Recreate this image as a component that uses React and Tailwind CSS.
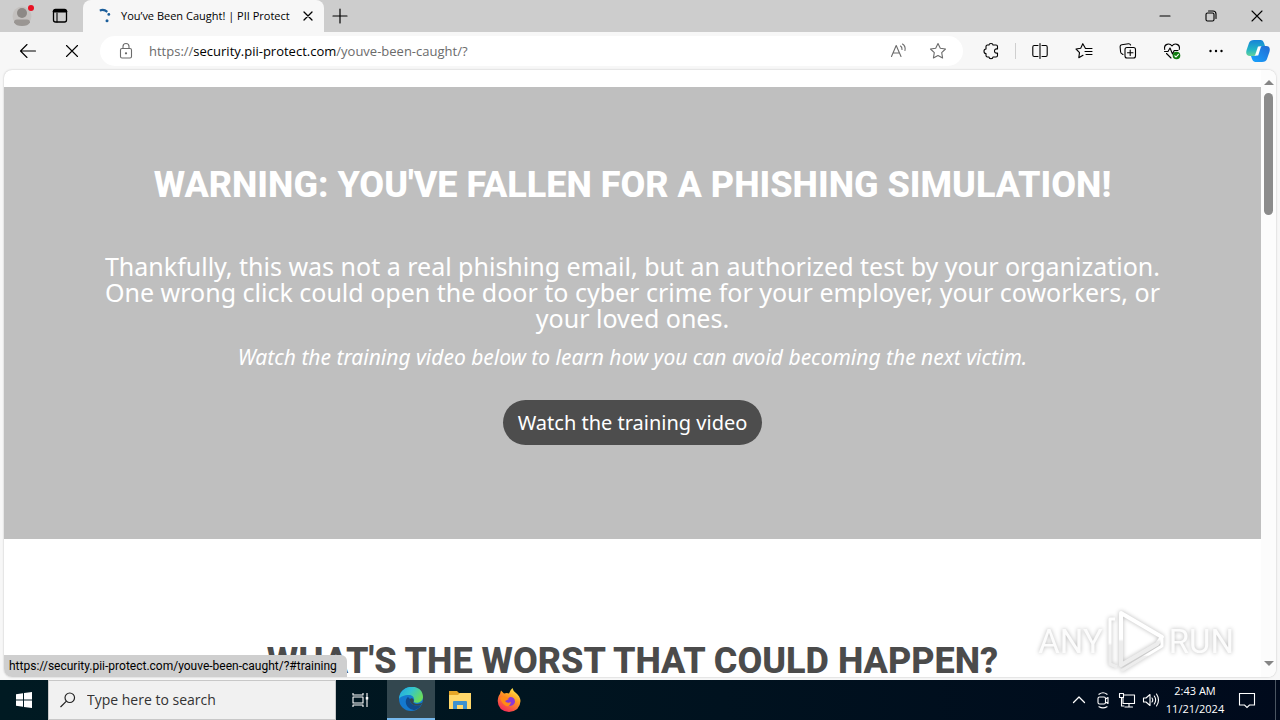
import { useState } from "react";

const PAGE_URL = "https://security.pii-protect.com/youve-been-caught/?";

function Icon({ children, className = "size-5", label }) {
  return (
    <svg
      viewBox="0 0 20 20"
      className={className}
      fill="none"
      stroke="currentColor"
      strokeWidth="1.1"
      strokeLinecap="round"
      strokeLinejoin="round"
      role={label ? "img" : undefined}
      aria-label={label}
      aria-hidden={label ? undefined : true}
    >
      {children}
    </svg>
  );
}

function TabBar() {
  return (
    <div className="flex h-8 shrink-0 bg-[#cdcdcd]">
      <div className="flex w-[83px] items-center rounded-br-md">
        <button aria-label="Profile" className="ml-3">
          <svg viewBox="0 0 24 24" className="size-6">
            <circle cx="10" cy="12" r="9.5" fill="#c4c1bf" />
            <circle cx="10" cy="9" r="5" fill="#8d8986" />
            <path d="M2 18.5Q2 15.5 5 15.5H15Q18 15.5 18 18.5Q16 22 10 22Q4 22 2 18.5Z" fill="#9a9693" />
            <circle cx="19" cy="4" r="3" fill="#e81123" />
          </svg>
        </button>
        <button aria-label="Tab actions" className="ml-3.5">
          <Icon>
            <rect x="3.5" y="3.5" width="13" height="12.5" rx="2" strokeWidth="1.3" />
            <path d="M4 5.2H16" strokeWidth="2.4" />
            <path d="M7 7V16" strokeWidth="1.1" />
          </Icon>
        </button>
      </div>
      <div className="flex w-[241px] items-center rounded-t-lg bg-[#f7f7f7]">
        <svg viewBox="0 0 16 16" className="ml-3.5 size-4 shrink-0" fill="#1b5e9b">
          <path d="M2.5 1.5Q7 -0.5 11 3L9.7 4.8Q6.5 2 3 3.6Z" />
          <circle cx="11.8" cy="6.4" r="1.4" />
          <circle cx="10" cy="12.7" r="1.5" />
        </svg>
        <span className="ml-2 flex-1 text-[11px] whitespace-nowrap">You’ve Been Caught! | PII Protect</span>
        <button aria-label="Close tab" className="mr-1.5">
          <Icon>
            <path d="M6 6L14 14M14 6L6 14" strokeWidth="1.3" />
          </Icon>
        </button>
      </div>
      <button aria-label="New tab" className="ml-1.5">
        <Icon>
          <path d="M3 10H17M10 3V17" strokeWidth="1.2" />
        </Icon>
      </button>
      <div className="ml-auto flex">
        <button aria-label="Minimize" className="flex w-[46px] items-center justify-center">
          <Icon>
            <path d="M5 10H15" />
          </Icon>
        </button>
        <button aria-label="Restore" className="flex w-[46px] items-center justify-center">
          <Icon>
            <rect x="5" y="7" width="8" height="8" rx="1.5" />
            <path d="M7.5 5H12Q15 5 15 8V12.5" />
          </Icon>
        </button>
        <button aria-label="Close window" className="flex w-[46px] items-center justify-center">
          <Icon>
            <path d="M5 5L15 15M15 5L5 15" />
          </Icon>
        </button>
      </div>
    </div>
  );
}

function AddressBar() {
  const [url, setUrl] = useState(PAGE_URL);
  const [editing, setEditing] = useState(false);

  return (
    <div className="ml-[18px] flex h-[30px] flex-1 items-center rounded-full bg-white pr-[15px] pl-4 text-[#6b6b6b]">
      <Icon label="Secure site">
        <rect x="4.5" y="7.5" width="11" height="9.5" rx="1.5" />
        <path d="M7 7.5V5.5A3 3 0 0 1 13 5.5V7.5" />
        <circle cx="10" cy="12.3" r="0.6" fill="currentColor" />
      </Icon>
      <div className="relative ml-[13px] flex-1 text-[13px] leading-5">
        <input
          type="text"
          aria-label="Address"
          value={editing ? url : ""}
          onFocus={() => setEditing(true)}
          onBlur={() => setEditing(false)}
          onChange={(e) => setUrl(e.target.value)}
          className="block w-full bg-transparent text-black outline-none"
        />
        {!editing && (
          <span className="pointer-events-none absolute inset-0 whitespace-nowrap">
            https://<span className="text-black">security.pii-protect.com</span>/youve-been-caught/?
          </span>
        )}
      </div>
      <button aria-label="Read aloud">
        <Icon>
          <path d="M2.5 15.5L7.2 4.5L12 15.5M4.2 12H10.4" />
          <path d="M11.5 5Q13.2 6 13 8.5M13.5 3Q16.8 5 16 9.5" />
        </Icon>
      </button>
      <button aria-label="Add to favorites" className="ml-[19px]">
        <Icon>
          <path d="M10 2.5L12.3 7.3L17.5 8L13.7 11.7L14.6 17L10 14.5L5.4 17L6.3 11.7L2.5 8L7.7 7.3Z" />
        </Icon>
      </button>
    </div>
  );
}

function Toolbar() {
  return (
    <div className="flex h-[38px] shrink-0 items-center bg-[#f7f7f7] pr-2.5">
      <button aria-label="Back" className="ml-[18px]">
        <Icon>
          <path d="M2.5 10H17.5M9 3.5L2.5 10L9 16.5" />
        </Icon>
      </button>
      <button aria-label="Stop" className="ml-6">
        <Icon>
          <path d="M4.5 4.5L15.5 15.5M15.5 4.5L4.5 15.5" />
        </Icon>
      </button>
      <AddressBar />
      <div className="ml-[18px] flex items-center gap-6">
        <button aria-label="Extensions">
          <Icon>
            <path d="M6 4H8Q8 2.5 10 2.5Q12 2.5 12 4H15Q16.5 4 16.5 5.5V8Q13.5 7.5 13.5 10Q13.5 12.5 16.5 12V14.5Q16.5 16 15 16H12Q12 17.7 10 17.7Q8 17.7 8 16H6.5Q5 16 5 14.5V12.5Q3 12.5 3 10.2Q3 8 5 8V5.5Q5 4 6.5 4" />
          </Icon>
        </button>
        <span className="-mx-2.5 h-4 w-px bg-[#cfcfcf]" />
        <button aria-label="Split screen">
          <Icon>
            <path d="M8 4.5H4.2Q2.8 4.5 2.8 6V14Q2.8 15.5 4.2 15.5H8M12 4.5H15.8Q17.2 4.5 17.2 6V14Q17.2 15.5 15.8 15.5H12M10 2.5V17.5" />
          </Icon>
        </button>
        <button aria-label="Favorites">
          <Icon>
            <path d="M18 7.5H11.5L8.8 2.7L6.7 7.3L2 8L5.5 11.7L4.8 16.7L9 14.3M11 10.5H18M12 13.5H18" />
          </Icon>
        </button>
        <button aria-label="Collections">
          <Icon>
            <path d="M5 13.5L4.2 13Q2.8 12.5 2.6 11L2.1 5.8Q2 4 3.7 3.7L10.5 2.7Q12 2.5 12.6 4" />
            <rect x="7" y="6.5" width="10.5" height="10.5" rx="2" />
            <path d="M12.2 9V14.5M9.5 11.7H15" />
          </Icon>
        </button>
        <button aria-label="Browser essentials">
          <Icon>
            <path d="M2.7 8.5C1.5 3 7.5 1.5 10 5C12.5 1.5 18.5 3 17.3 8.5M2.5 10.5H6L8 7L10.5 13L12.2 9.5H16M4.5 12.5L9 17" />
            <circle cx="14.5" cy="14.5" r="3.8" fill="#107c10" stroke="none" />
            <path d="M12.8 14.8L14.1 16L16.4 13.3" stroke="white" />
          </Icon>
        </button>
        <button aria-label="Settings and more">
          <Icon>
            <g fill="currentColor" stroke="none">
              <circle cx="4.5" cy="10" r="1.2" />
              <circle cx="10" cy="10" r="1.2" />
              <circle cx="15.5" cy="10" r="1.2" />
            </g>
          </Icon>
        </button>
      </div>
      <button aria-label="Copilot" className="ml-5">
        <svg viewBox="0 0 24 24" className="size-6">
          <defs>
            <linearGradient id="copilotA" x1="0" y1="0" x2="0" y2="1">
              <stop offset="0" stopColor="#1683d8" />
              <stop offset="0.6" stopColor="#22b5c5" />
              <stop offset="1" stopColor="#65d29a" />
            </linearGradient>
            <linearGradient id="copilotB" x1="1" y1="0" x2="0" y2="1">
              <stop offset="0" stopColor="#2269d2" />
              <stop offset="1" stopColor="#17a5ff" />
            </linearGradient>
          </defs>
          <path d="M8 1H15Q17 1 18 4L19 7H15Q13 7 12.2 10L10.7 15Q10 17 7.5 17H4Q-1 17 0.6 11L3 4Q4 1 8 1Z" fill="url(#copilotA)" />
          <path d="M16 23H9Q7 23 6 20L5 17H9Q11 17 11.8 14L13.3 9Q14 7 16.5 7H20Q25 7 23.4 13L21 20Q20 23 16 23Z" fill="url(#copilotB)" />
          <path d="M12 7.5H15L12.2 16.5H9Z" fill="white" />
        </svg>
      </button>
    </div>
  );
}

function Scrollbar() {
  return (
    <div className="flex w-[15px] shrink-0 flex-col items-center bg-[#fcfcfc] pt-2 pb-2.5" aria-hidden="true">
      <svg viewBox="0 0 10 6" className="mt-0.5 h-1.5 w-2.5" fill="#858585">
        <path d="M5 0L10 5H0Z" />
      </svg>
      <div className="mt-[7px] h-[122px] w-[9px] rounded-full bg-[#8b8b8b]" />
      <svg viewBox="0 0 10 6" className="mt-auto h-1.5 w-2.5" fill="#858585">
        <path d="M0 0H10L5 5Z" />
      </svg>
    </div>
  );
}

function Watermark() {
  return (
    <div className="pointer-events-none absolute right-[42px] bottom-1 flex items-center gap-1 font-[Roboto,sans-serif] text-[33px] leading-none text-[#fcfcfc] drop-shadow-[0_0_2px_#00000048]">
      <span>ANY</span>
      <svg viewBox="0 0 58 64" className="h-16 w-[58px]" fill="none" strokeLinejoin="round">
        <defs>
          <linearGradient id="markFade" x1="0" y1="0" x2="0" y2="1">
            <stop offset="0" stopColor="#ffffff" />
            <stop offset="0.5" stopColor="#ffffff" />
            <stop offset="0.55" stopColor="#ededed" />
            <stop offset="1" stopColor="#ededed" />
          </linearGradient>
        </defs>
        <path d="M8 10H3V55L10 58" stroke="url(#markFade)" strokeWidth="3" />
        <path d="M14 4L55 28L50 35L14 56Z" stroke="url(#markFade)" strokeWidth="4" />
        <path d="M14 62L55 37V30" stroke="url(#markFade)" strokeWidth="3" />
      </svg>
      <span>RUN</span>
    </div>
  );
}

function LandingPage() {
  return (
    <main className="min-w-0 flex-1 overflow-hidden pt-[17px] text-center">
      <section className="flex h-[452px] flex-col items-center bg-[#bfbfbf] px-[100px] text-white">
        <h1 className="mt-[77px] font-[Roboto,sans-serif] text-4xl leading-[42px] font-extrabold whitespace-nowrap">
          WARNING: YOU'VE FALLEN FOR A PHISHING SIMULATION!
        </h1>
        <p className="mt-[47px] font-['Noto_Sans',sans-serif] text-[25px] leading-[26px]">
          Thankfully, this was not a real phishing email, but an authorized test by your organization. One wrong click
          could open the door to cyber crime for your employer, your coworkers, or your loved ones.
        </p>
        <p className="mt-3 font-['Noto_Sans',sans-serif] text-[21px] leading-7 italic">
          Watch the training video below to learn how you can avoid becoming the next victim.
        </p>
        <a
          href="#training"
          className="mt-[29px] flex h-[45px] items-center rounded-full bg-[#4d4d4d] px-[15px] font-['Noto_Sans',sans-serif] text-xl whitespace-nowrap"
        >
          Watch the training video
        </a>
      </section>
      <h2 className="mt-[101px] font-[Roboto,sans-serif] text-4xl leading-[42px] font-extrabold text-[#4b4b4b]">
        WHAT'S THE WORST THAT COULD HAPPEN?
      </h2>
    </main>
  );
}

function Taskbar() {
  return (
    <footer className="flex h-10 shrink-0 items-center bg-linear-to-r from-[#001a22] via-[#001520] via-40% to-[#000a1c] text-white">
      <button aria-label="Start" className="flex w-12 justify-center">
        <svg viewBox="0 0 16 16" className="size-4" fill="white">
          <path d="M0 2.3L7 1.3V7.5H0ZM8 1.1L16 0V7.5H8ZM0 8.5H7V14.7L0 13.7ZM8 8.5H16V16L8 14.9Z" />
        </svg>
      </button>
      <label className="flex h-full w-72 items-center border border-[#c8c8c8] bg-[#f1f1f1] pl-2.5 text-[#222]">
        <Icon>
          <circle cx="12" cy="7.5" r="5.3" strokeWidth="1.3" />
          <path d="M8 11.5L2 17.5" strokeWidth="1.3" />
        </Icon>
        <input
          type="text"
          aria-label="Search"
          placeholder="Type here to search"
          className="ml-2.5 w-full bg-transparent text-sm outline-none placeholder:text-[#333]"
        />
      </label>
      <button aria-label="Task view" className="flex w-12 justify-center">
        <Icon>
          <path d="M3 3V5H13V3M3 17V15H13V17M17 3V17" strokeLinecap="butt" />
          <rect x="3" y="7" width="10" height="6" />
          <path d="M17 7V9.5" strokeWidth="2.5" strokeLinecap="butt" />
        </Icon>
      </button>
      <button
        aria-label="Microsoft Edge"
        className="ml-[3px] flex h-full w-12 items-center justify-center border-b-2 border-[#76b9ed] bg-[#33474f]"
      >
        <svg viewBox="0 0 24 24" className="size-6">
          <defs>
            <linearGradient id="edgeTop" x1="0" y1="0" x2="1" y2="0.5">
              <stop offset="0" stopColor="#1fa4e2" />
              <stop offset="0.5" stopColor="#33c4cf" />
              <stop offset="1" stopColor="#69dc5c" />
            </linearGradient>
          </defs>
          <circle cx="12" cy="12" r="12" fill="#1479cf" />
          <path d="M0 12C1 -4 24 -4 24 10C24 15 18 17 14.5 15C16 13 15 8 10 8C5 8 1 10 0 12Z" fill="url(#edgeTop)" />
          <path d="M9 10C4 14 8 23 16 23C19 22 21 20 22 18C16 20 10 17 11 12Z" fill="#114a8b" />
          <path d="M11 12C10 17 16 20 22 18L24 15C20 18 15 17 14.3 15.4C16 13 13 10 11 12Z" fill="#33474f" />
        </svg>
      </button>
      <button aria-label="File Explorer" className="flex w-[50px] justify-center">
        <svg viewBox="0 0 22 20" className="h-5 w-[22px]">
          <path d="M0 1H8L10 3H22V19H0Z" fill="#e5a527" />
          <path d="M0 5H9L11 3H22V19H0Z" fill="#ffd76a" />
          <path d="M4 19V12Q4 11 5 11H17Q18 11 18 12V19H14V15H8V19Z" fill="#3d91cf" />
        </svg>
      </button>
      <button aria-label="Firefox" className="flex w-12 justify-center">
        <svg viewBox="0 0 24 24" className="size-6">
          <defs>
            <linearGradient id="fox" x1="0.8" y1="0" x2="0.2" y2="1">
              <stop offset="0" stopColor="#fff14f" />
              <stop offset="0.4" stopColor="#ff9a20" />
              <stop offset="1" stopColor="#f5205e" />
            </linearGradient>
          </defs>
          <path d="M3 6L4 2.5L7 5.5Q10 4.5 12 5.5Q13 2 15.5 0Q16 3 19 5Q23 8 23.5 13Q23 23 12 24Q1 23 0.7 13Q1 8 3 6Z" fill="url(#fox)" />
          <path d="M7 10Q10 12 13 9Q18 9 18 14Q17 18 12 18Q7 18 7 13Z" fill="#8b38d5" />
          <path d="M3 10Q6 7 9 9L12 11L8 13Q10 16 14 14Q13 19 9 18Q5 16 3 10Z" fill="#ff8b16" />
        </svg>
      </button>
      <div className="ml-auto flex items-center gap-1">
        <button aria-label="Show hidden icons">
          <Icon>
            <path d="M4.5 12.5L10 7L15.5 12.5" strokeWidth="1.3" />
          </Icon>
        </button>
        <button aria-label="Meet now">
          <Icon>
            <rect x="5" y="7" width="7.5" height="7" rx="1.5" />
            <path d="M12.5 9L15 7.5V13.5L12.5 12M6 4.3Q10 1.3 14 4.3M6 16.7Q10 19 14 16.7" />
          </Icon>
        </button>
        <button aria-label="Network">
          <Icon>
            <path d="M7 5H17.5V13.5H6V8M12 13.5V17M8 17H15.5" />
            <path d="M2.5 3.5H6.5V7.5H2.5ZM4.5 7.5V16H7" />
          </Icon>
        </button>
        <button aria-label="Volume">
          <Icon>
            <path d="M2.5 8H5L9 4.5V15.5L5 12H2.5ZM11 8Q12.5 10 11 12M13.3 6Q16 10 13.3 14M15.5 4Q19.5 10 15.5 16" />
          </Icon>
        </button>
      </div>
      <div className="ml-1 w-[60px] text-center text-[11px] leading-[18px] whitespace-nowrap">
        <div>2:43 AM</div>
        <div>11/21/2024</div>
      </div>
      <button aria-label="Notifications" className="mr-[18px] ml-3">
        <Icon>
          <path d="M2.5 3.5H17.5V15H12.5L10 17.5L7.5 15H2.5Z" strokeLinejoin="miter" />
        </Icon>
      </button>
      <span className="mr-1 h-full w-px bg-[#4a5561]" />
    </footer>
  );
}

export default function App() {
  return (
    <div className="flex h-screen flex-col overflow-hidden bg-[#f7f7f7] font-['Open_Sans','Noto_Sans',sans-serif] text-black">
      <TabBar />
      <Toolbar />
      <div className="relative mx-1 mb-[3px] flex min-h-0 flex-1 overflow-hidden rounded-lg bg-white shadow-[0_0_2px_#00000040]">
        <LandingPage />
        <Scrollbar />
        <Watermark />
        <div className="absolute bottom-0 left-0 rounded-tr-md bg-[#cfcfcf] pr-2.5 pl-[5px] py-0.5 font-[Roboto,sans-serif] text-xs leading-[18px]">
          https://security.pii-protect.com/youve-been-caught/?#training
        </div>
      </div>
      <Taskbar />
    </div>
  );
}
